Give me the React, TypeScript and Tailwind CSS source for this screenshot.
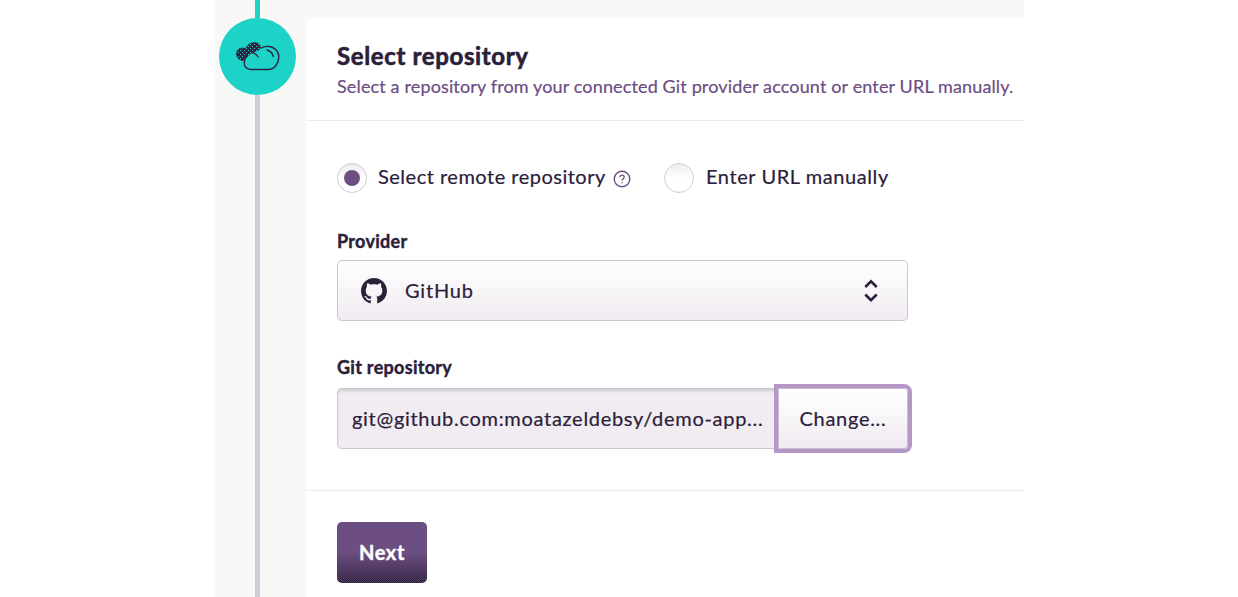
import React from "react";

function CloudIcon() {
  return (
    <svg width="44" height="30" viewBox="0 0 44 30" fill="none">
      <defs>
        <pattern id="dots" width="4" height="4" patternUnits="userSpaceOnUse">
          <rect width="4" height="4" fill="#2f2340" />
          <rect x="0" y="0" width="1" height="1" fill="#1dd3c8" />
          <rect x="2" y="2" width="1" height="1" fill="#1dd3c8" />
        </pattern>
      </defs>
      <path
        d="M10 18C5 20 0 16 .5 11.500C1 7 5 5 10 6.500C12 1 17 0 21 1C24 2 25.500 5 24.500 8C22 11 21 13 20 12C17 10 14 11 12 14Z"
        fill="url(#dots)"
        stroke="#2f2340"
        strokeWidth="1"
        strokeDasharray="2 1"
      />
      <path
        d="M24 6.500C29 2.500 37 4 41 9C44 13.500 43 20 39.500 24C37.500 26.500 35 27.500 32 27.500H15C10.500 27.500 7.500 24 8.500 20C9 16 12 12.800 17 12.500C17 10 20 8 24 6.500Z"
        fill="#1dd3c8"
      />
      <path d="M10 13C15 9 20 11 24 7L20 3L12 7Z" fill="url(#dots)" />
      <path
        d="M24.500 6.500C29.500 3 37 4 41 9C44 13.500 43 20 39.500 24C37.500 26.500 35 27.500 32 27.500H15C10.500 27.500 7.500 24 8.500 20C8.500 17.500 10 14.500 12 13.500M17.500 11C20 12 21.500 13.500 22.500 15.500M30.500 8C34 8.500 36.500 11 37.500 15"
        stroke="#2f2340"
        strokeWidth="1.400"
      />
    </svg>
  );
}

function Radio({ checked, label }: { checked?: boolean; label: React.ReactNode }) {
  return (
    <label className="flex h-[31px] items-center">
      <span className="flex size-[30px] items-center justify-center rounded-full border border-[#d2cdd5] bg-linear-to-b from-[#f0ecf1] via-white via-50% to-white">
        {checked && <span className="size-4 rounded-full bg-[#6c4e82]" />}
      </span>
      {label}
    </label>
  );
}

function GitHubMark() {
  return (
    <svg width="26" height="26" viewBox="0 0 16 16" fill="#2b2039">
      <path d="M8 0C3.580 0 0 3.580 0 8c0 3.540 2.290 6.530 5.470 7.590.4.070.55-.17.55-.38 0-.19-.01-.82-.01-1.490-2.010.37-2.530-.49-2.690-.94-.09-.23-.48-.94-.82-1.130-.28-.15-.68-.52-.01-.53.63-.01 1.080.58 1.230.82.72 1.210 1.870.87 2.330.66.07-.52.28-.87.51-1.070-1.780-.2-3.640-.89-3.640-3.950 0-.87.31-1.590.82-2.150-.08-.2-.36-1.020.08-2.120 0 0 .67-.21 2.200.82.64-.18 1.320-.27 2-.27s1.360.09 2 .27c1.530-1.040 2.200-.82 2.200-.82.44 1.100.16 1.920.08 2.120.51.56.82 1.270.82 2.150 0 3.070-1.870 3.750-3.650 3.950.29.25.54.73.54 1.480 0 1.070-.01 1.930-.01 2.200 0 .21.15.46.55.38A8.010 8.010 0 0 0 16 8c0-4.420-3.580-8-8-8z" />
    </svg>
  );
}

export default function App() {
  return (
    <div className="h-[597px] w-full overflow-hidden bg-white font-['Lato',sans-serif] text-[#2b2039] [-webkit-text-stroke:0.2px_currentColor]">
      <div className="ml-[215px] flex h-full w-[809px] bg-[#f8f8f6]">
        <div className="flex w-[91px] shrink-0 flex-col items-center pr-[6px]">
          <div className="h-[18px] w-[5px] shrink-0 bg-[#1dd3c8]" />
          <div className="flex size-[77px] shrink-0 items-center justify-center rounded-full bg-[#1dd3c8]">
            <CloudIcon />
          </div>
          <div className="w-[5px] flex-1 bg-[#d1ccd5]" />
        </div>
        <main className="mt-[18px] w-[718px] rounded-tl-lg bg-white">
          <header className="h-[103px] border-b border-[#ececec] pt-[22px] pl-[31px]">
            <h1 className="text-[24px] leading-8 font-bold tracking-[0.64px] whitespace-nowrap [-webkit-text-stroke:0.6px_currentColor]">
              Select repository
            </h1>
            <p className="text-[18px] leading-7 tracking-[0.14px] whitespace-nowrap text-[#6c4e82]">
              Select a repository from your connected Git provider account or enter URL manually.
            </p>
          </header>
          <section className="h-[370px] border-b border-[#ececec] pt-[41px] pl-[31px]">
            <div className="flex">
              <div className="w-[327px]">
                <Radio
                  checked
                  label={
                    <>
                      <span className="mb-[3px] ml-[11px] w-[235px] text-[20px] leading-7 tracking-[0.5px] whitespace-nowrap">
                        Select remote repository
                      </span>
                      <svg className="mt-[3px]" width="18" height="18" viewBox="0 0 18 18" fill="none" stroke="#6c4e82">
                        <circle cx="9" cy="9" r="7.800" strokeWidth="1.400" />
                        <path d="M6.800 7.200C6.800 4.500 11.200 4.500 11.200 7.200C11.200 8.800 9 8.700 9 10.500M9 12V13.300" strokeWidth="1.300" />
                      </svg>
                    </>
                  }
                />
              </div>
              <Radio
                label={
                  <span className="mb-[3px] ml-[12px] text-[20px] leading-7 tracking-[0.58px] whitespace-nowrap">
                    Enter URL manually
                  </span>
                }
              />
            </div>
            <div className="mt-[36px] text-[18px] leading-6 font-bold tracking-[0.3px] [-webkit-text-stroke:0.4px_currentColor]">
              Provider
            </div>
            <div className="mt-[7px] flex h-[61px] w-[571px] items-center rounded-[5px] border border-[#cbc6ce] bg-linear-to-b from-white to-[#f0ebf1] pr-[29px] pl-[23px]">
              <GitHubMark />
              <span className="mb-[2px] ml-[18px] flex-1 text-[20px] tracking-[0.8px]">GitHub</span>
              <svg width="14" height="24" viewBox="0 0 14 24" fill="none" stroke="#2b2039" strokeWidth="2.600">
                <path d="M1.300 8L7 2.300L12.700 8M1.300 15.500L7 21.200L12.700 15.500" />
              </svg>
            </div>
            <div className="mt-[34px] text-[18px] leading-6 font-bold tracking-[0.3px] [-webkit-text-stroke:0.4px_currentColor]">
              Git repository
            </div>
            <div className="mt-[9px] flex h-[61px]">
              <div className="w-[441px] rounded-l-[5px] border border-r-0 border-[#cbc6ce] bg-[#f1ecf1] pl-[14px] text-[20px] leading-[59px] tracking-[0.7px] whitespace-nowrap shadow-[inset_0_3px_3px_-1px_#cfcad2]">
                git@github.com:moatazeldebsy/demo-app...
              </div>
              <button className="h-[61px] w-[130px] rounded-r-[4px] border border-[#c9bdd1] bg-linear-to-b from-white to-[#f0ebf1] pb-[2px] text-[20px] tracking-[0.7px] outline-4 outline-[#b597c7]">
                Change...
              </button>
            </div>
          </section>
          <button className="mt-[31px] ml-[31px] h-[61px] w-[90px] rounded-[5px] bg-[linear-gradient(to_bottom,#6c4e82_50%,transparent_100%),repeating-conic-gradient(#2b2039_0_25%,#4a3659_0_50%)] bg-[size:100%_100%,2px_2px] pb-[2px] text-[20px] font-bold tracking-[0.6px] text-white [-webkit-text-stroke:0.4px_currentColor]">
            Next
          </button>
        </main>
      </div>
    </div>
  );
}
